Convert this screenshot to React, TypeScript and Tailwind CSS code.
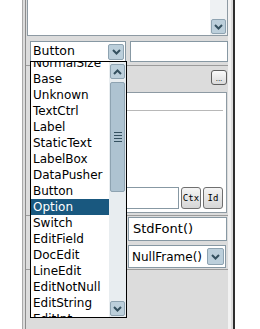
import React from "react";

const items = [
  "NormalSize",
  "Base",
  "Unknown",
  "TextCtrl",
  "Label",
  "StaticText",
  "LabelBox",
  "DataPusher",
  "Button",
  "Option",
  "Switch",
  "EditField",
  "DocEdit",
  "LineEdit",
  "EditNotNull",
  "EditString",
  "EditInt",
];

const ArrowBtn = ({ up, size = 15 }: { up?: boolean; size?: number }) => (
  <div
    className="shrink-0 rounded-[2px] border border-[#8ea3b1] bg-[#bccfdb] flex items-center justify-center"
    style={{ width: size, height: size }}
  >
    <svg width="9" height="6" viewBox="0 0 9 6">
      <path
        d={up ? "M1 5 L4.5 1.5 L8 5" : "M1 1 L4.5 4.5 L8 1"}
        stroke="#34505f"
        strokeWidth="2"
        fill="none"
      />
    </svg>
  </div>
);

const SmallBtn = ({ label }: { label: string }) => (
  <div className="w-[20px] h-[22px] rounded-[3px] border border-[#6f6f6f] bg-gradient-to-b from-[#f4f4f4] to-[#d6d6d6] flex items-center justify-center font-['DejaVu_Sans_Mono',monospace] text-[9px] leading-none">
    {label}
  </div>
);

export default function App() {
  return (
    <div className="w-[260px] h-[329px] bg-white flex overflow-hidden relative font-['DejaVu_Sans',sans-serif] text-[12px] text-black">
      <div className="w-[22px] shrink-0" />
      <div className="flex bg-[#dcdcdc] border-l border-[#a9a9a9] pl-[2px] border-r-2 border-r-[#2e2e2e]">
        <div className="border-l border-[#8c8c8c] w-[203px] flex flex-col">
          {/* top text area */}
          <div className="ml-[1px] h-[36px] flex bg-white border-x border-b border-[#8d9aa3]">
            <div className="flex-1" />
            <div className="w-[17px] bg-[#eef1f3] flex flex-col justify-end items-center pb-[1px]">
              <ArrowBtn />
            </div>
          </div>

          {/* class combo + name field */}
          <div className="mt-[5px] h-[21px] flex gap-[4px] pl-[4px]">
            <div className="w-[96px] bg-white border border-[#8798a3] flex items-center pl-[2px] pr-[1px]">
              <span className="flex-1 leading-none text-[12.5px]">Button</span>
              <ArrowBtn size={16} />
            </div>
            <div className="w-[98px] bg-white border border-[#8798a3]" />
          </div>

          <div className="mt-[3px] border-t border-[#9b9b9b]" />

          <div className="mt-[4px] self-end mr-[1px] w-[16px] h-[15px] rounded-[3px] border border-[#5e5e5e] bg-gradient-to-b from-[#fafafa] to-[#dadada] flex items-end justify-center pb-[1px]">
            <span className="text-[7px] leading-none">...</span>
          </div>

          {/* property box */}
          <div className="mt-[7px] ml-[4px] mr-[1px] h-[121px] bg-white border border-[#8d9aa3] flex flex-col">
            <div className="mt-[17px] mr-[3px] border-t border-[#b8b8b8]" />
            <div className="flex-1" />
            <div className="mb-[3px] mr-[3px] flex items-center gap-[2px]">
              <div className="flex-1 h-[22px] bg-white border border-[#8798a3]" />
              <SmallBtn label="Ctx" />
              <SmallBtn label="Id" />
            </div>
          </div>

          <div className="mt-[2px] border-t border-[#9b9b9b]" />

          <div className="mt-[1px] ml-[102px] mr-[1px] h-[24px] bg-white border border-[#8798a3] flex items-center pl-[4px] text-[13px]">
            StdFont()
          </div>
          <div className="mt-[4px] ml-[102px] mr-[2px] h-[23px] bg-white border border-[#8798a3] flex items-center pl-[3px] pr-[1px] text-[12px]">
            <span className="flex-1 whitespace-nowrap">NullFrame()</span>
            <ArrowBtn size={17} />
          </div>
          <div className="mt-[1px] border-t border-[#9b9b9b]" />
        </div>
        <div className="w-[3px] bg-[#f2f2f2]" />
        <div className="w-[2px]" />
      </div>

      {/* dropdown list */}
      <div className="absolute left-[30px] top-[61px] w-[97px] h-[257px] border border-black bg-white flex overflow-hidden">
        <div className="flex-1 overflow-hidden">
          <div className="mt-[-7px]">
            {items.map((it) => (
              <div
                key={it}
                className={`h-[16px] leading-[16px] pl-[2px] whitespace-nowrap ${
                  it === "Option" ? "bg-[#19587f] text-white" : ""
                }`}
              >
                {it}
              </div>
            ))}
          </div>
        </div>
        <div className="w-[17px] bg-[#e8edf0] flex flex-col items-center py-[2px] pb-[1px]">
          <ArrowBtn up />
          <div className="mt-[3px] w-[15px] h-[110px] rounded-[2px] border border-[#8ea3b1] bg-[#aec3d1] flex flex-col items-center justify-center gap-[2px]">
            <div className="w-[8px] h-px bg-[#34505f]" />
            <div className="w-[8px] h-px bg-[#34505f]" />
            <div className="w-[8px] h-px bg-[#34505f]" />
            <div className="w-[8px] h-px bg-[#34505f]" />
          </div>
          <div className="flex-1" />
          <ArrowBtn />
        </div>
      </div>
    </div>
  );
}
